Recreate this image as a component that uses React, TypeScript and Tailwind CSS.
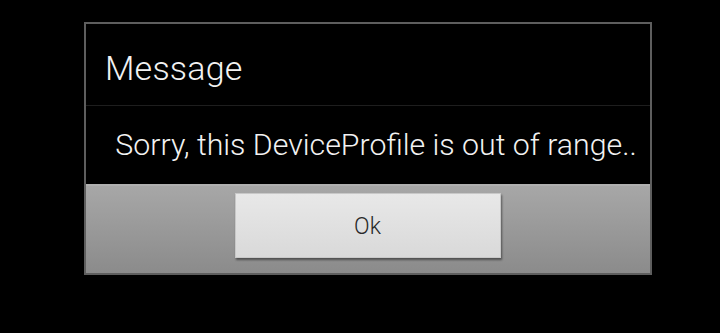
export default function App() {
  return (
    <div className="w-[720px] h-[333px] bg-black pt-[22px] pl-[84px] font-['Roboto',sans-serif]">
      <div className="w-[568px] h-[253px] border-2 border-[#5e5e5e] flex flex-col">
        <div className="h-[82px] flex items-center pl-[19px] pt-[7px] border-b border-[#1e1e1e]">
          <span className="text-[34px] font-light text-[#f2f2f2] tracking-[0.2px]">Message</span>
        </div>
        <div className="h-[78px] flex items-center justify-center pl-[16px] pb-[1px]">
          <span className="text-[30.3px] font-light text-[#f2f2f2]">Sorry, this DeviceProfile is out of range..</span>
        </div>
        <div className="flex-1 bg-gradient-to-b from-[#a7a7a7] to-[#8b8b8b] border-t-2 border-[#b0b0b0] flex justify-center pt-[7px]">
          <button className="w-[266px] h-[65px] ml-[-1px] pt-[4px] bg-gradient-to-b from-[#e8e8e8] to-[#d9d9d9] border border-[#c8c8c8] shadow-[1px_2px_2px_rgba(0,0,0,0.45)] text-[23px] font-light text-[#2a2a2a]">
            Ok
          </button>
        </div>
      </div>
    </div>
  );
}
